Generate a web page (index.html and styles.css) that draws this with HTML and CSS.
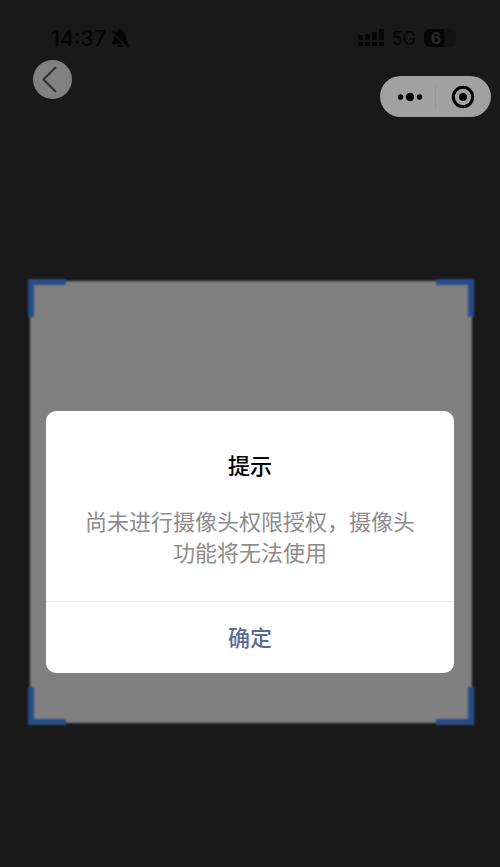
FILE: index.html
```html
<!DOCTYPE html>
<html lang="zh-CN">
<head>
<meta charset="utf-8">
<meta name="viewport" content="width=device-width, initial-scale=1">
<title>提示</title>
<link rel="stylesheet" href="styles.css">
</head>
<body>
<header class="status">
  <div class="status-group">
    <span class="time">14:37</span>
    <svg class="bell" width="20" height="20" viewBox="0 0 20 20" aria-hidden="true">
      <path class="ink" d="M10 1a2 2 0 0 1 2 2c2.500.8 3.800 2.800 3.800 5.500 0 3.500 1 4.500 2.200 6V16H2v-1.500c1.200-1.500 2.200-2.500 2.200-6C4.200 5.800 5.500 3.800 8 3a2 2 0 0 1 2-2zM7.500 17h5a2.500 2.500 0 0 1-5 0z"/>
      <path class="gap" d="M1.500 3.500l16 16"/>
      <path class="slash" d="M2.500 2.500l16 16"/>
    </svg>
  </div>
  <div class="status-group status-right">
    <svg class="ink" width="26" height="18" viewBox="0 0 26 18" aria-hidden="true">
      <rect x="0" y="6" width="5" height="5" rx="1"/><rect x="7" y="5" width="5" height="6" rx="1"/><rect x="14" y="3" width="5" height="8" rx="1"/><rect x="21" y="0" width="5" height="11" rx="1"/>
      <rect x="0" y="13" width="5" height="4" rx="1"/><rect x="7" y="13" width="5" height="4" rx="1"/><rect x="14" y="13" width="5" height="4" rx="1"/><rect x="21" y="13" width="5" height="4" rx="1"/>
    </svg>
    <span class="network">5G</span>
    <span class="battery">6</span>
  </div>
</header>
<nav class="nav">
  <button class="back" type="button" aria-label="返回">
    <svg width="39" height="39" viewBox="0 0 39 39" aria-hidden="true"><path d="M23 7L10.500 19.500 23 32"/></svg>
  </button>
  <div class="capsule">
    <button type="button" aria-label="更多">
      <svg width="26" height="10" viewBox="0 0 26 10" aria-hidden="true"><circle cx="3.500" cy="5" r="2.700"/><circle cx="13" cy="5" r="4.200"/><circle cx="22.500" cy="5" r="2.700"/></svg>
    </button>
    <button type="button" aria-label="关闭">
      <svg width="24" height="24" viewBox="0 0 24 24" aria-hidden="true"><circle class="ring" cx="12" cy="12" r="9.700"/><circle cx="12" cy="12" r="4"/></svg>
    </button>
  </div>
</nav>
<main class="scanner">
  <div class="view"></div>
  <i class="corner top left"></i>
  <i class="corner top right"></i>
  <i class="corner bottom left"></i>
  <i class="corner bottom right"></i>
</main>
<div class="overlay">
  <section class="modal" role="alertdialog" aria-labelledby="modal-title" aria-describedby="modal-text">
    <div class="modal-body">
      <h1 id="modal-title">提示</h1>
      <p id="modal-text">尚未进行摄像头权限授权，摄像头功能将无法使用</p>
    </div>
    <button class="confirm" type="button">确定</button>
  </section>
</div>
</body>
</html>
```
FILE: styles.css
```css
* {
  box-sizing: border-box;
}

body {
  margin: 0;
  min-height: 100vh;
  background: #191919;
  color: #060606;
  font-family: "Liberation Sans", "Noto Sans CJK SC", sans-serif;
}

button {
  margin: 0;
  padding: 0;
  border: 0;
  background: none;
  font: inherit;
}

.status {
  display: flex;
  justify-content: space-between;
  align-items: center;
  height: 60px;
  padding: 16px 44px 0 51px;
  font-family: Inter, sans-serif;
}

.status-group {
  display: flex;
  align-items: center;
  gap: 4px;
}

.status-right {
  gap: 8px;
}

.time {
  font-size: 21px;
  font-weight: 600;
}

.network {
  font-size: 18px;
}

.ink {
  fill: #060606;
}

.bell path {
  stroke-width: 2;
}

.bell .gap {
  stroke: #191919;
}

.bell .slash {
  stroke: #060606;
}

.battery {
  width: 32px;
  height: 18px;
  padding-right: 8px;
  border-radius: 6px;
  background: linear-gradient(90deg, #060606 20px, #131313 20px);
  color: #292929;
  font-size: 16px;
  font-weight: 700;
  line-height: 18px;
  text-align: center;
}

.nav {
  display: flex;
  justify-content: space-between;
  align-items: flex-start;
  padding: 0 9px 0 33px;
}

.back {
  width: 39px;
  height: 39px;
  border-radius: 50%;
  background: #818181;
}

.back svg {
  display: block;
  fill: none;
  stroke: #303030;
  stroke-width: 2;
}

.capsule {
  display: grid;
  grid-template-columns: 1fr 1fr;
  align-items: center;
  width: 111px;
  height: 41px;
  margin-top: 16px;
  border-radius: 21px;
  background: #a1a1a1;
}

.capsule button {
  display: flex;
  justify-content: center;
  align-items: center;
  height: 24px;
}

.capsule button:first-child {
  border-right: 1px solid #979797;
  padding-left: 5px;
}

.capsule .ring {
  fill: none;
  stroke: #000;
  stroke-width: 3;
}

.scanner {
  position: relative;
  margin: 162px 26px 0 28px;
  padding: 2px;
}

.view {
  aspect-ratio: 1;
  background: #808080;
  filter: blur(1px);
}

.corner {
  position: absolute;
  width: 38px;
  height: 38px;
  border: 0 solid #274b86;
  filter: blur(1px);
}

.top {
  top: 0;
  border-top-width: 6px;
}

.bottom {
  bottom: 0;
  border-bottom-width: 6px;
}

.left {
  left: 0;
  border-left-width: 6px;
}

.right {
  right: 0;
  border-right-width: 6px;
}

.overlay {
  position: absolute;
  top: 411px;
  left: 0;
  right: 0;
  padding: 0 46px;
}

.modal {
  overflow: hidden;
  border-radius: 10px;
  background: #fff;
  font-size: 22px;
  text-align: center;
}

.modal-body {
  padding: 40px 38px 32px;
}

.modal h1 {
  margin: 0;
  color: #000;
  font-size: 22px;
  font-weight: 500;
  line-height: 32px;
}

.modal p {
  margin: 24px 0 0;
  color: #8c8c8c;
  font-weight: 400;
  line-height: 31px;
}

.confirm {
  display: block;
  width: 100%;
  height: 72px;
  padding-bottom: 4px;
  border-top: 1px solid #ebebeb;
  color: #576b95;
  font-weight: 500;
}
```
